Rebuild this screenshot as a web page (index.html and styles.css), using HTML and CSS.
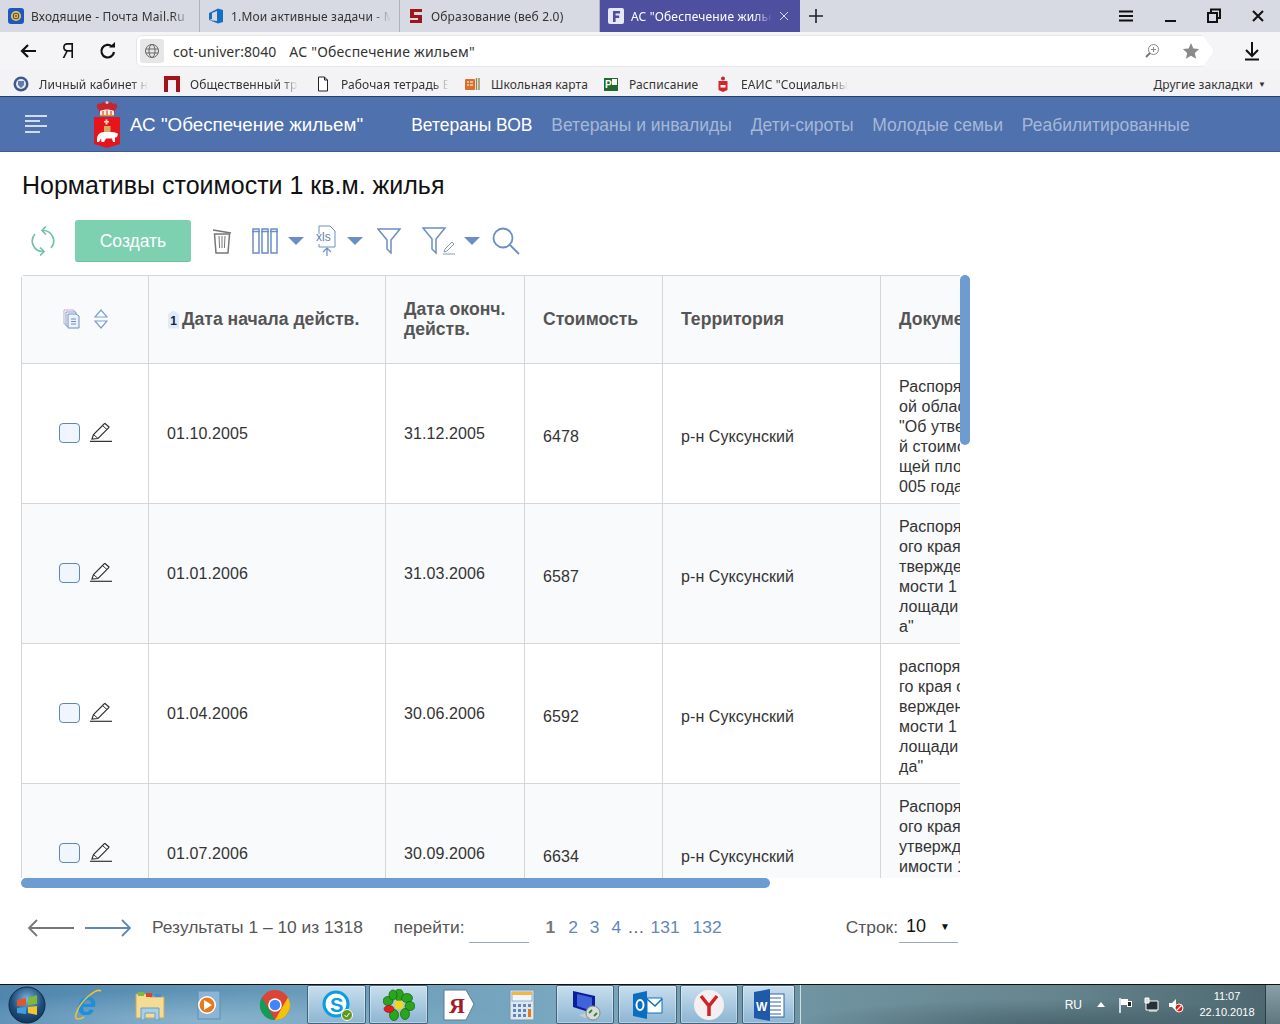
FILE: index.html
```html
<!DOCTYPE html>
<html lang="ru">
<head>
<meta charset="utf-8">
<title>АС "Обеспечение жильем"</title>
<link rel="stylesheet" href="styles.css">
</head>
<body>
<div class="tabs">
  <div class="tab">
    <svg class="fav" viewBox="0 0 16 16"><rect width="16" height="16" rx="3" fill="#1f55c4"/><circle cx="8" cy="8" r="4.200" fill="none" stroke="#ffc21a" stroke-width="1.800"/><circle cx="8" cy="8" r="1.600" fill="none" stroke="#ffc21a" stroke-width="1.200"/></svg>
    <span class="tab-text">Входящие - Почта Mail.Ru</span>
  </div>
  <div class="tab">
    <svg class="fav" viewBox="0 0 16 16"><path d="M1 5l9-4.500 5 1.500v12l-5 1.500-9-3.500 8 1V3L4 5v6l-3 1z" fill="#1570c4"/></svg>
    <span class="tab-text">1.Мои активные задачи - Microsoft</span>
  </div>
  <div class="tab">
    <svg class="fav" viewBox="0 0 16 16"><path d="M2 1h12v3H6v3h8v8H2v-3h8V10H2z" fill="#a0151c"/></svg>
    <span class="tab-text">Образование (веб 2.0)</span>
  </div>
  <div class="tab tab-active">
    <svg class="fav" viewBox="0 0 16 16"><rect width="16" height="16" rx="2" fill="#e8e8f4"/><path d="M5 3h7v2.400H7.600v2.200h3.600V10H7.600v4H5z" fill="#4f4fa0"/></svg>
    <span class="tab-text tab-text-light">АС "Обеспечение жильем"</span>
    <svg class="tab-close" viewBox="0 0 10 10"><path d="M1 1l8 8M9 1l-8 8" stroke="#d9d9ee" stroke-width="1"/></svg>
  </div>
  <svg class="newtab" viewBox="0 0 14 14"><path d="M7 0v14M0 7h14" stroke="#222" stroke-width="1.600"/></svg>
  <div class="win-controls">
    <svg class="win-ic" viewBox="0 0 16 16"><path d="M1 3.500h14M1 8h14M1 12.500h14" stroke="#111" stroke-width="1.800"/></svg>
    <svg class="win-ic" viewBox="0 0 16 16"><path d="M3 13h11" stroke="#111" stroke-width="2"/></svg>
    <svg class="win-ic" viewBox="0 0 16 16"><path d="M5 4V1.500h9V10h-3M2 5h9v9H2z" fill="none" stroke="#111" stroke-width="2"/></svg>
    <svg class="win-ic" viewBox="0 0 16 16"><path d="M3 3l10 10M13 3L3 13" stroke="#111" stroke-width="2"/></svg>
  </div>
</div>
<div class="toolbar">
  <svg class="tool-ic" viewBox="0 0 20 20"><path d="M18 10H4M10 4l-6 6 6 6" fill="none" stroke="#111" stroke-width="2.200"/></svg>
  <span class="ya">Я</span>
  <svg class="tool-ic" viewBox="0 0 20 20"><path d="M16 11a6.300 6.300 0 1 1-2-5.500" fill="none" stroke="#111" stroke-width="2.200"/><path d="M11 6.500h6V1z" fill="#111"/></svg>
  <div class="address">
    <span class="globe"><svg viewBox="0 0 16 16"><circle cx="8" cy="8" r="6.500" fill="none" stroke="#666"/><ellipse cx="8" cy="8" rx="3" ry="6.500" fill="none" stroke="#666"/><path d="M2 6h12M2 10h12" stroke="#666"/></svg></span>
    <span class="url">cot-univer:8040</span><span class="url-title">АС "Обеспечение жильем"</span>
    <svg class="zoom-ic" viewBox="0 0 16 16"><circle cx="9.500" cy="6.500" r="5" fill="none" stroke="#888"/><path d="M7 6.500h5M9.500 4v5" stroke="#888"/><path d="M6 10l-4 4" stroke="#777" stroke-width="2"/></svg>
    <svg class="star-ic" viewBox="0 0 18 18"><path d="M9 1l2.400 5.400 5.800.6-4.400 3.900 1.300 5.800L9 13.700l-5.100 3 1.300-5.800L.8 7l5.800-.6z" fill="#8a8a8a"/></svg>
  </div>
  <svg class="dl-ic" viewBox="0 0 18 20"><path d="M9 1v13M3 9l6 6 6-6" fill="none" stroke="#111" stroke-width="2"/><path d="M2 18.500h14" stroke="#111" stroke-width="2"/></svg>
</div>
<div class="bookmarks">
  <span class="bm bm1"><svg class="bm-ic" viewBox="0 0 16 16"><circle cx="8" cy="8" r="7.500" fill="#3f5a8a"/><circle cx="8" cy="8" r="5" fill="#e8e8ee"/><path d="M5 5h6v4l-3 3-3-3z" fill="#5f7bb0"/></svg><span class="bm-text bm-fade">Личный кабинет нал</span></span>
  <span class="bm bm2"><svg class="bm-ic" viewBox="0 0 16 16"><path d="M0 0h16v16h-4V4H4v12H0z" fill="#a2141a"/></svg><span class="bm-text bm-fade">Общественный транс</span></span>
  <span class="bm bm3"><svg class="bm-ic" viewBox="0 0 16 16"><path d="M3.500 1h6l3 3v11h-9zM9.500 1v3h3" fill="#fff" stroke="#222"/></svg><span class="bm-text bm-fade">Рабочая тетрадь Еди</span></span>
  <span class="bm bm4"><svg class="bm-ic" viewBox="0 0 16 16"><rect x="0" y="3" width="10" height="11" rx="1" fill="#d9702a"/><path d="M2 6h2M5 6h3M2 9h2M5 9h3" stroke="#fff"/><path d="M11.500 2v12M14 2v12" stroke="#8a8a5a" stroke-width="1.400"/></svg><span class="bm-text">Школьная карта</span></span>
  <span class="bm bm5"><svg class="bm-ic" viewBox="0 0 16 16"><rect x="1" y="2" width="14" height="13" fill="#1f6b2e"/><rect x="9" y="3" width="5" height="6" fill="#fff"/><text class="bm-p" x="2" y="12">P</text></svg><span class="bm-text">Расписание</span></span>
  <span class="bm bm6"><svg class="bm-ic" viewBox="0 0 16 16"><circle cx="8" cy="2.500" r="2" fill="#c8262c"/><path d="M3.500 5h9v9l-4.500 2-4.500-2z" fill="#d8232a"/><path d="M5.500 9h5v2.500h-5z" fill="#fff"/></svg><span class="bm-text bm-fade">ЕАИС "Социальные</span></span>
  <span class="bm-other">Другие закладки<span class="bm-caret">▼</span></span>
</div>
<header class="app-header">
  <svg class="burger" viewBox="0 0 22 18"><path d="M0 1h22M0 6h15M0 11h22M0 17h15" stroke="#fff" stroke-width="1.500"/></svg>
  <svg class="arms" viewBox="0 0 26 47">
    <path d="M5 9C1 6 3 1 7 3c1-2 3-2 4-1 1-2 3-2 4 0 1-1 3-1 4 1 4-2 6 3 2 6l-1 5H6z" fill="#c8242c"/>
    <path d="M6 10c4-2 10-2 14 0v4H6z" fill="#f6ecdc"/>
    <path d="M9 10v4M13 9.500V14M17 10v4" stroke="#c8242c"/>
    <circle cx="13" cy="1.500" r="1.500" fill="#d8c8c8"/>
    <path d="M6 14.500h14" stroke="#d0a020" stroke-width="1.200"/>
    <path d="M0 16h26v27l-13 4-13-4z" fill="#e8141c"/>
    <path d="M11.500 18.500h2v1.500h1.500v1.500h-1.500v2h-2v-2H10V20h1.500z" fill="#f6d8d0"/>
    <path d="M10 25h6.500v6H10z" fill="#d8a860"/>
    <path d="M3 38c0-4 3-7 7-7h8c3 0 5 1 6 2l-1 3-2 .5V41h-2l-1-3.500h-6L10 41H7.500L7 37.500 5 41H3z" fill="#fff"/>
  </svg>
  <span class="app-title">АС "Обеспечение жильем"</span>
  <nav class="nav">
    <a class="nav-item nav-active">Ветераны ВОВ</a>
    <a class="nav-item">Ветераны и инвалиды</a>
    <a class="nav-item">Дети-сироты</a>
    <a class="nav-item">Молодые семьи</a>
    <a class="nav-item">Реабилитированные</a>
  </nav>
</header>
<main class="page">
  <h1 class="page-title">Нормативы стоимости 1 кв.м. жилья</h1>
  <div class="actions">
    <svg class="ic-refresh" viewBox="0 0 24 30"><path d="M12 4.500A10.500 10.500 0 0 1 20 22" fill="none" stroke="#6fc4a8" stroke-width="1.700"/><path d="M15 .5l-4 4 4 4" fill="none" stroke="#6fc4a8" stroke-width="1.700"/><path d="M12 25.500A10.500 10.500 0 0 1 4 8" fill="none" stroke="#6fc4a8" stroke-width="1.700"/><path d="M9 21.500l4 4-4 4" fill="none" stroke="#6fc4a8" stroke-width="1.700"/></svg>
    <button class="btn-create">Создать</button>
    <svg class="ic-trash" viewBox="0 0 20 28"><path d="M1 3l18 3" stroke="#777" stroke-width="1.500"/><path d="M2.500 7h15l-1.500 19H4z" fill="none" stroke="#777" stroke-width="1.500"/><path d="M7 9l.6 12M10 9v12M13 9l-.6 12" stroke="#777"/></svg>
    <svg class="ic-cols" viewBox="0 0 26 26"><path d="M1 1h6v24H1zM10 1h6v24h-6zM19 1h6v24h-6zM0 3.500h8M9 3.500h8M18 3.500h8" fill="none" stroke="#6a8fc4" stroke-width="1.500"/></svg>
    <span class="caret caret-a"></span>
    <svg class="ic-xls" viewBox="0 0 22 32"><path d="M3 9V1h11l5 5v16H3v-3" fill="none" stroke="#6a8fc4"/><text class="xls-text" x="0" y="16">xls</text><path d="M11 31V23M7 27l4-4 4 4" fill="none" stroke="#6a8fc4" stroke-width="1.200"/></svg>
    <span class="caret caret-b"></span>
    <svg class="ic-filter" viewBox="0 0 24 26"><path d="M1 1h22l-9 11v13l-4-4v-9z" fill="none" stroke="#6a8fc4" stroke-width="1.500"/></svg>
    <svg class="ic-filter2" viewBox="0 0 34 28"><path d="M1 1h22l-9 11v14l-4-4V12z" fill="none" stroke="#6a8fc4" stroke-width="1.500"/><path d="M22 25l1-3 7-7 2 2-7 7zM21 27h12" fill="none" stroke="#8a9ab4"/></svg>
    <span class="caret caret-c"></span>
    <svg class="ic-search" viewBox="0 0 28 28"><circle cx="11" cy="11" r="9.500" fill="none" stroke="#6a8fc4" stroke-width="1.800"/><path d="M18 18l9 9" stroke="#6a8fc4" stroke-width="1.800"/></svg>
  </div>
  <div class="table-wrap">
    <div class="table-clip">
    <table class="grid">
      <colgroup><col class="c1"><col class="c2"><col class="c3"><col class="c4"><col class="c5"><col class="c6"></colgroup>
      <thead>
        <tr>
          <th class="cell-tools"><span class="tools tools-head">
            <svg class="ic-copy" viewBox="0 0 18 20"><path d="M1 1h10v14H1z" fill="#fff" stroke="#c9a8c9"/><path d="M3 3h10v14H3z" fill="#fff" stroke="#7b9fd0"/><path d="M5 5h8l3 2v12H5z" fill="#eef3fa" stroke="#6a8fc4"/><path d="M8 10h5M8 12.500h5M8 15h5" stroke="#6a8fc4"/></svg>
            <svg class="ic-sort" viewBox="0 0 14 22"><path d="M1 9l6-7 6 7zM1 13l6 7 6-7z" fill="#fff" stroke="#7b9fd0" stroke-width="1.200"/></svg>
          </span></th>
          <th><span class="sort-badge">1</span>Дата начала действ.</th>
          <th>Дата оконч. действ.</th>
          <th>Стоимость</th>
          <th>Территория</th>
          <th>Документ</th>
        </tr>
      </thead>
      <tbody>
        <tr>
          <td class="cell-tools"><span class="tools"><span class="check"></span><svg class="ic-edit" viewBox="0 0 22 20"><path d="M2 17l1.500-4.500L14 2l1-.5 4 3.500-.5 1L8 16.500z" fill="#fff" stroke="#333" stroke-width="1.200"/><path d="M12.500 3.500l4.500 4M3.500 12.500l4.500 4" stroke="#333"/><path d="M0 19.300h22" stroke="#333" stroke-width="1.200"/></svg></span></td>
          <td class="cell-date">01.10.2005</td><td class="cell-date">31.12.2005</td><td>6478</td><td>р-н Суксунский</td>
          <td class="doc">Распоряжение губернатора Перм<br>ой области от 2005 года № 12<br>"Об утверждении нормативно<br>й стоимости 1 квадратного мет<br>щей площади жилья на IV кв<br>005 года"</td>
        </tr>
        <tr>
          <td class="cell-tools"><span class="tools"><span class="check"></span><svg class="ic-edit" viewBox="0 0 22 20"><path d="M2 17l1.500-4.500L14 2l1-.5 4 3.500-.5 1L8 16.500z" fill="#fff" stroke="#333" stroke-width="1.200"/><path d="M12.500 3.500l4.500 4M3.500 12.500l4.500 4" stroke="#333"/><path d="M0 19.300h22" stroke="#333" stroke-width="1.200"/></svg></span></td>
          <td class="cell-date">01.01.2006</td><td class="cell-date">31.03.2006</td><td>6587</td><td>р-н Суксунский</td>
          <td class="doc">Распоряжение губернатора Перм<br>ого края от 2006 года № 15 "Об<br>тверждении нормативной стои<br>мости 1 квадратного метра об<br>лощади жилья на I квартал 200<br>а"</td>
        </tr>
        <tr>
          <td class="cell-tools"><span class="tools"><span class="check"></span><svg class="ic-edit" viewBox="0 0 22 20"><path d="M2 17l1.500-4.500L14 2l1-.5 4 3.500-.5 1L8 16.500z" fill="#fff" stroke="#333" stroke-width="1.200"/><path d="M12.500 3.500l4.500 4M3.500 12.500l4.500 4" stroke="#333"/><path d="M0 19.300h22" stroke="#333" stroke-width="1.200"/></svg></span></td>
          <td class="cell-date">01.04.2006</td><td class="cell-date">30.06.2006</td><td>6592</td><td>р-н Суксунский</td>
          <td class="doc">распоряжение губернатора Перм<br>го края от 2006 года "Об ут<br>верждении нормативной стои<br>мости 1 квадратного метра об<br>лощади жилья на II квартал го<br>да"</td>
        </tr>
        <tr>
          <td class="cell-tools"><span class="tools"><span class="check"></span><svg class="ic-edit" viewBox="0 0 22 20"><path d="M2 17l1.500-4.500L14 2l1-.5 4 3.500-.5 1L8 16.500z" fill="#fff" stroke="#333" stroke-width="1.200"/><path d="M12.500 3.500l4.500 4M3.500 12.500l4.500 4" stroke="#333"/><path d="M0 19.300h22" stroke="#333" stroke-width="1.200"/></svg></span></td>
          <td class="cell-date">01.07.2006</td><td class="cell-date">30.09.2006</td><td>6634</td><td>р-н Суксунский</td>
          <td class="doc">Распоряжение губернатора Перм<br>ого края от 2006 года "Об<br>утверждении нормативной сто<br>имости 1 квадратного метра об<br>щей площади жилья на III кварт<br>ал 2006 года"</td>
        </tr>
      </tbody>
    </table>
    </div>
    <div class="scroll-v"></div>
    <div class="scroll-h"></div>
  </div>
  <div class="pager">
    <svg class="arrow" viewBox="0 0 48 18"><path d="M47 9H2M10 1L2 9l8 8" fill="none" stroke="#777" stroke-width="1.800"/></svg>
    <svg class="arrow arrow-next" viewBox="0 0 48 18"><path d="M1 9h45M38 1l8 8-8 8" fill="none" stroke="#5f86bd" stroke-width="1.800"/></svg>
    <span class="results">Результаты 1 – 10 из 1318</span>
    <span class="goto">перейти:</span>
    <span class="goto-input"></span>
    <span class="pages"><b class="pg-cur">1</b><a class="pg">2</a><a class="pg">3</a><a class="pg">4</a><span class="pg-dots">…</span><a class="pg">131</a><a class="pg pg-last">132</a></span>
    <span class="rows-label">Строк:</span>
    <span class="rows-select"><span>10</span><span class="rows-caret">▼</span></span>
  </div>
</main>
<footer class="taskbar">
  <span class="tb-slot ts-orb"><svg class="tb-ic-orb" viewBox="0 0 38 38"><defs><radialGradient id="orb" cx="50%" cy="35%" r="70%"><stop offset="0" stop-color="#7fb7dc"/><stop offset=".6" stop-color="#1f4f7c"/><stop offset="1" stop-color="#0f2f52"/></radialGradient></defs><circle cx="19" cy="19" r="18" fill="url(#orb)" stroke="#0e2a44"/><path d="M9 14l9-2v7l-9 1z" fill="#e2562c"/><path d="M20 12l9-3v9l-9 1z" fill="#7fb93a"/><path d="M9 22l9-1v7l-9-1z" fill="#3f9fe0"/><path d="M20 21l9-1v9l-9-2z" fill="#f4c430"/></svg></span>
  <span class="tb-slot ts-ie"><svg class="tb-ic" viewBox="0 0 32 32"><text class="ie-e" x="4" y="26">e</text><path d="M28 2C24-1 8 10 3 25c-2 6 3 6 8 3" fill="none" stroke="#f0c030" stroke-width="1.600"/></svg></span>
  <span class="tb-slot ts-folder"><svg class="tb-ic" viewBox="0 0 32 32"><path d="M2 5h12l2 3h14v21H2z" fill="#f4dc94" stroke="#c8a860"/><rect x="4" y="3" width="6" height="4" fill="#7fb93a"/><rect x="12" y="4" width="6" height="4" fill="#d8452c"/><rect x="21" y="5" width="6" height="3" fill="#3f8fd0"/><path d="M7 31v-12h18v12h-4v-7h-10v7z" fill="#a8cfe8" stroke="#6a9ec4"/></svg></span>
  <span class="tb-slot ts-wmp"><svg class="tb-ic" viewBox="0 0 32 32"><rect x="5" y="2" width="22" height="28" fill="#8cb4d4" stroke="#5f8fb4"/><circle cx="14" cy="16" r="9" fill="#fff"/><circle cx="14" cy="16" r="7.500" fill="#e8781c"/><path d="M11 11l8 5-8 5z" fill="#fff"/></svg></span>
  <span class="tb-slot ts-chrome"><svg class="tb-ic" viewBox="0 0 32 32"><circle cx="16" cy="16" r="15" fill="#db4437"/><path d="M29 8.500A15 15 0 0 1 16 31l6.500-11.500z" fill="#f4c20d"/><path d="M16 31A15 15 0 0 1 3 8.500l7 12z" fill="#0f9d58"/><circle cx="16" cy="16" r="6.800" fill="#fff"/><circle cx="16" cy="16" r="5.300" fill="#4285f4"/></svg></span>
  <span class="tb-btn b-59 b-gap3"><svg class="tb-ic" viewBox="0 0 32 32"><circle cx="15" cy="15" r="12" fill="#fff" stroke="#0a9ee0" stroke-width="3"/><text class="skype-s" x="9" y="23">S</text><circle cx="26" cy="26" r="5.500" fill="#5f9a1c" stroke="#fff"/><path d="M23.500 26l2 2 3-4" stroke="#fff" fill="none"/></svg></span>
  <span class="tb-btn b-59 b-gap3"><svg class="tb-ic" viewBox="0 0 32 32"><g fill="#2aa61e" stroke="#145f10" stroke-width=".7"><ellipse cx="16" cy="6" rx="4.500" ry="6"/><ellipse cx="24" cy="9" rx="5.500" ry="4.500"/><ellipse cx="27" cy="17" rx="5" ry="4.500"/><ellipse cx="22" cy="25" rx="4.500" ry="5.500"/><ellipse cx="11" cy="26" rx="4.500" ry="5.500"/><ellipse cx="5" cy="12" rx="5" ry="4.500"/><ellipse cx="10" cy="6" rx="4" ry="5"/></g><ellipse cx="6" cy="20" rx="5" ry="3.500" fill="#e02020" stroke="#8a1010" stroke-width=".6"/><circle cx="16" cy="16" r="4.500" fill="#f4d41c"/></svg></span>
  <span class="tb-slot ts-ya"><svg class="tb-ic" viewBox="0 0 32 32"><path d="M1 1h22l8 14-8 16H1z" fill="#fff" stroke="#5f7b90"/><text class="ya-tb" x="6" y="24">Я</text></svg></span>
  <span class="tb-slot ts-calc"><svg class="tb-ic" viewBox="0 0 26 32"><rect x="1" y="1" width="24" height="30" rx="1" fill="#dfe7ee" stroke="#7f93a8"/><rect x="3" y="3" width="20" height="9" fill="#f2f6fa" stroke="#8cb0d0"/><rect x="3" y="3" width="20" height="3" fill="#f0b840"/><path d="M4 15h3v3H4zM9 15h3v3H9zM14 15h3v3h-3zM19 15h3v3h-3zM4 20h3v3H4zM9 20h3v3H9zM14 20h3v3h-3zM4 25h3v3H4zM9 25h3v3H9zM14 25h3v3h-3z" fill="#5f86bd"/><path d="M19 20h3v8h-3z" fill="#e8781c"/></svg></span>
  <span class="tb-btn b-58 b-gap4"><svg class="tb-ic" viewBox="0 0 32 32"><path d="M4 2l22 5v18L4 18z" fill="#0b1f9a"/><path d="M8 5l15 3.500V22L8 17z" fill="#3f63d8"/><path d="M10 26l10-3 6 2-10 4z" fill="#c8ccd0"/><circle cx="24" cy="24" r="7" fill="#d8dcdc" stroke="#888"/><path d="M20 24l3-3M28 24l-3 3" stroke="#2a8a2a" stroke-width="1.800"/></svg></span>
  <span class="tb-btn b-59 b-gap3"><svg class="tb-ic" viewBox="0 0 32 32"><path d="M15 2L1 5v22l14 3z" fill="#0a6fc4"/><ellipse cx="8" cy="16" rx="3.500" ry="5" fill="none" stroke="#fff" stroke-width="2"/><path d="M15 9h15v15H15z" fill="#fff" stroke="#0a6fc4"/><path d="M15 10l8 7 7-7" fill="none" stroke="#0a6fc4" stroke-width="1.500"/></svg></span>
  <span class="tb-btn b-58 b-gap4"><svg class="tb-ic" viewBox="0 0 32 32"><circle cx="16" cy="16" r="15" fill="#f4f0f0"/><path d="M8 7l8 10 8-10M16 17v10" fill="none" stroke="#d0202c" stroke-width="3.500"/></svg></span>
  <span class="tb-btn b-53 b-gap5"><svg class="tb-ic" viewBox="0 0 32 32"><rect x="14" y="5" width="17" height="23" fill="#fff" stroke="#3063b0"/><path d="M17 9h11M17 13h11M17 17h11M17 21h11M17 25h11" stroke="#3063b0"/><path d="M17 0L1 3v26l16 3z" fill="#1f5aa8"/><text class="word-w" x="3" y="22">W</text></svg></span>
  <span class="tb-spacer"></span>
  <span class="tray">
    <span class="tray-lang">RU</span>
    <span class="tray-up"></span>
    <svg class="tray-ic" viewBox="0 0 16 16"><path d="M2 1v15" stroke="#fff" stroke-width="1.500"/><path d="M3 2h7v2h4v6H9V8H3z" fill="#fff"/><path d="M10 5h3v4h-3z" fill="#222"/></svg>
    <svg class="tray-ic" viewBox="0 0 16 16"><path d="M3 4h12v9H3z" fill="#26323a" stroke="#fff"/><path d="M2 1h4v5H2zM6 14h8" stroke="#fff" fill="#ddd"/></svg>
    <svg class="tray-ic" viewBox="0 0 16 16"><path d="M1 6h3l4-4v12l-4-4H1z" fill="#fff"/><circle cx="11" cy="11" r="4" fill="#e01818" stroke="#fff"/><path d="M8.500 13.500l5-5" stroke="#fff" stroke-width="1.300"/></svg>
    <span class="clock"><span>11:07</span><span>22.10.2018</span></span>
    <span class="show-desktop"></span>
  </span>
</footer>
</body>
</html>
```
FILE: styles.css
```css
* { box-sizing: border-box; }
html, body { margin: 0; padding: 0; }
body { width: 1280px; height: 1024px; overflow: hidden; display: flex; flex-direction: column; background: #fff; font-family: "Liberation Sans", Arial, sans-serif; color: #333; }
svg { display: block; flex: none; }

/* tab strip */
.tabs { height: 32px; flex: none; display: flex; align-items: stretch; background: #d7d9e3; }
.tab { width: 200px; display: flex; align-items: center; padding: 0 8px; gap: 7px; border-right: 1px solid #aeb0ba; overflow: hidden; }
.tab-active { background: #4f4fa0; border-right: 0; padding-right: 0; }
.fav { width: 16px; height: 16px; }
.tab-text { font: 12px "Noto Sans", sans-serif; letter-spacing: .16px; color: #333; white-space: nowrap; flex: 1; overflow: hidden; min-width: 0; -webkit-mask-image: linear-gradient(to right, #000 88%, transparent); mask-image: linear-gradient(to right, #000 88%, transparent); }
.tab-text-light { color: #fff; }
.tab-close { width: 10px; height: 10px; margin-right: 11px; }
.newtab { width: 14px; height: 14px; margin: 9px 0 0 9px; }
.win-controls { margin-left: auto; display: flex; gap: 28px; padding: 8px 14px 0 0; }
.win-ic { width: 16px; height: 16px; }

/* address bar */
.toolbar { height: 38px; flex: none; display: flex; align-items: center; background: #f5f5f7; padding-left: 18px; position: relative; }
.tool-ic { width: 20px; height: 20px; }
.ya { width: 20px; margin: 0 20px; text-align: center; font: 22px "Liberation Sans", sans-serif; color: #111; transform: scaleX(.8); }
.address { width: 1078px; height: 32px; margin-left: 18px; background: #fff; border: 1px solid #e6e6ea; border-radius: 6px 0 0 6px; display: flex; align-items: center; clip-path: polygon(0 0, 98.900% 0, 100% 50%, 98.900% 100%, 0 100%); }
.globe { width: 24px; height: 24px; margin-left: 3px; background: #e6e6e6; border-radius: 3px; display: flex; align-items: center; justify-content: center; }
.globe svg { width: 16px; height: 16px; }
.url { font: 14px "Noto Sans", sans-serif; letter-spacing: .07px; color: #333; margin-left: 9px; }
.url-title { font: 14px "Noto Sans", sans-serif; letter-spacing: .22px; color: #333; margin-left: 13px; }
.zoom-ic { width: 16px; height: 16px; margin-left: auto; }
.star-ic { width: 18px; height: 18px; margin: 0 13px 0 22px; }
.dl-ic { width: 18px; height: 20px; margin-left: 29px; }

/* bookmarks */
.bookmarks { height: 26px; flex: none; display: flex; align-items: center; background: #f3f3f5; padding-top: 2px; font: 12px "Noto Sans", sans-serif; letter-spacing: .1px; }
.bm { display: flex; align-items: center; gap: 10px; overflow: hidden; flex: none; }
.bm-ic { width: 16px; height: 16px; }
.bm-text { white-space: nowrap; color: #333; }
.bm-fade { -webkit-mask-image: linear-gradient(to right, #000 85%, transparent); mask-image: linear-gradient(to right, #000 85%, transparent); overflow: hidden; }
.bm1 { width: 135px; margin-left: 13px; }
.bm2 { width: 134px; margin-left: 16px; }
.bm3 { width: 134px; margin-left: 17px; }
.bm4 { width: 125px; margin-left: 16px; }
.bm5 { width: 97px; margin-left: 13px; }
.bm6 { width: 133px; margin-left: 15px; }
.bm-p { font: bold 10px "Liberation Sans", sans-serif; fill: #fff; }
.bm-other { margin-left: auto; padding-right: 14px; color: #333; }
.bm-caret { font-size: 8px; margin-left: 5px; vertical-align: 2px; }

/* app header */
.app-header { height: 56px; flex: none; background: #4f71ae; border-top: 1px solid #24406f; border-bottom: 1px solid #3c5a90; display: flex; align-items: center; padding-left: 25px; }
.burger { width: 22px; height: 18px; }
.arms { width: 26px; height: 47px; margin: 1px 0 0 47px; }
.app-title { font-size: 18.800px; color: #fff; margin: 2px 0 0 10px; white-space: nowrap; }
.nav { display: flex; gap: 18.800px; margin: 2px 0 0 48px; }
.nav-item { font-size: 17.500px; color: #a6b8d6; white-space: nowrap; }
.nav-active { color: #fff; }

/* page */
.page { flex: 1; min-height: 0; padding-left: 21px; display: flex; flex-direction: column; align-items: flex-start; }
.page-title { font-size: 25px; font-weight: 400; color: #111; margin: 0; padding: 19px 0 0 1px; height: 50px; line-height: 28px; }
.actions { height: 73px; display: flex; align-items: center; padding-top: 5px; }
.ic-refresh { width: 24px; height: 30px; margin-left: 10px; }
.btn-create { width: 116px; height: 42px; margin-left: 20px; padding-top: 2px; background: #7dd0b0; color: #fff; border: 0; border-bottom: 1px solid #6fbfa0; border-radius: 3px; font: 17.500px "Liberation Sans", sans-serif; }
.ic-trash { width: 20px; height: 28px; margin-left: 21px; }
.ic-cols { width: 26px; height: 26px; margin-left: 20px; }
.caret { width: 0; height: 0; border-left: 8px solid transparent; border-right: 8px solid transparent; border-top: 8px solid #6a8fc4; flex: none; }
.caret-a { margin-left: 10px; }
.ic-xls { width: 22px; height: 32px; margin-left: 12px; }
.xls-text { font: 12px "Liberation Sans", sans-serif; fill: #5f7fb4; }
.caret-b { margin-left: 9px; }
.ic-filter { width: 24px; height: 26px; margin-left: 14px; }
.ic-filter2 { width: 34px; height: 28px; margin-left: 21px; }
.caret-c { margin-left: 8px; }
.ic-search { width: 28px; height: 28px; margin-left: 12px; }

/* table */
.table-wrap { width: 939px; height: 603px; flex: none; position: relative; }
.table-clip { width: 939px; height: 603px; overflow: hidden; border-radius: 4px 0 0 0; }
.grid { width: 1100px; table-layout: fixed; border-collapse: collapse; font-size: 16px; letter-spacing: .08px; }
.c1 { width: 127px; } .c2 { width: 237px; } .c3 { width: 139px; } .c4 { width: 138px; } .c5 { width: 218px; } .c6 { width: 241px; }
.grid th { height: 88px; background: #f9fafc; border: 1px solid #d6d6d8; font-size: 17.600px; line-height: 20px; font-weight: 700; letter-spacing: 0; color: #555; text-align: left; padding: 0 8px 2px 18px; vertical-align: middle; }
.grid td { height: 140px; border: 1px solid #d6d6d8; padding: 6px 18px 0; vertical-align: middle; color: #333; line-height: 20px; white-space: nowrap; }
.grid tbody tr:nth-child(even) td { background: #f9fafc; }
.grid td.cell-date { padding-top: 0; }
.grid td.cell-tools { padding: 0 0 1px 1px; }
.grid th.cell-tools { padding: 0 0 1px; }
.tools { display: flex; align-items: center; justify-content: center; gap: 10px; }
.tools-head { gap: 13px; padding-left: 1px; }
.ic-copy { width: 18px; height: 20px; }
.ic-sort { width: 14px; height: 22px; }
.sort-badge { display: inline-block; width: 11px; height: 18px; background: #deebfa; margin: 0 3px 0 1px; font-size: 12px; line-height: 21px; text-align: center; color: #223; clip-path: polygon(50% 0, 100% 20%, 100% 100%, 0 100%, 0 20%); }
.check { width: 21px; height: 20px; background: #f0f6fe; border: 1px solid #5f86b4; border-radius: 4px; }
.ic-edit { width: 22px; height: 20px; margin-bottom: 2px; }
.scroll-v { position: absolute; left: 939px; top: 0; width: 10px; height: 170px; background: #6e9bd0; border-radius: 5px; }
.scroll-h { position: absolute; left: 0; top: 603px; width: 749px; height: 10px; background: #6e9bd0; border-radius: 5px; }

/* pager */
.pager { width: 939px; height: 101px; flex: none; display: flex; align-items: center; font-size: 17.400px; padding-bottom: 2px; color: #555; }
.arrow { width: 48px; height: 18px; margin-left: 6px; }
.arrow-next { margin-left: 9px; }
.results { margin-left: 20px; white-space: nowrap; }
.goto { margin-left: 31px; }
.goto-input { width: 60px; height: 34px; margin: 31px 0 0 5px; border-bottom: 1px solid #9aa9c0; align-self: flex-start; }
.pages { margin-left: 16px; display: flex; white-space: nowrap; }
.pg-cur { font-weight: 700; color: #777; margin-right: 13px; }
.pg { color: #5f86bd; margin-right: 12px; }
.pg-dots { margin: 0 6px 0 -6px; color: #555; }
.pg-last { margin: 0 0 0 1px; }
.rows-label { margin-left: auto; }
.rows-select { width: 59px; height: 34px; margin: 31px 2px 0 1px; align-self: flex-start; border-bottom: 1px solid #9aa9c0; display: flex; justify-content: space-between; align-items: center; color: #111; padding: 2px 8px 0 7px; white-space: nowrap; font-size: 18px; }
.rows-caret { font-size: 10px; }

/* taskbar */
.taskbar { height: 40px; flex: none; display: flex; align-items: center; border-top: 1px solid #111; background: radial-gradient(ellipse 300px 30px at 200px 36px, rgba(170,205,225,.55), transparent), radial-gradient(ellipse 260px 26px at 1050px 40px, rgba(40,60,70,.45), transparent), linear-gradient(to right, #4f86ae 0%, #6a9cba 25%, #7aa8c0 45%, #6f929f 65%, #66868f 82%, #4c666f 100%); }
.tb-slot { display: flex; align-items: center; justify-content: center; height: 39px; flex: none; }
.ts-orb { width: 54px; } .ts-ie { width: 70px; } .ts-folder { width: 52px; } .ts-wmp { width: 66px; } .ts-chrome { width: 65px; } .ts-ya { width: 56px; } .ts-calc { width: 69px; }
.tb-ic-orb { width: 38px; height: 38px; }
.tb-ic { width: 32px; height: 32px; }
.tb-btn { height: 39px; display: flex; align-items: center; justify-content: center; flex: none; border: 1px solid #44627a; border-radius: 2px; background: linear-gradient(to bottom, #c8dfee, #8db5d2); box-shadow: inset 0 0 0 1px rgba(255,255,255,.35); }
.b-59 { width: 59px; } .b-58 { width: 58px; } .b-53 { width: 53px; }
.b-gap3 { margin-right: 3px; } .b-gap4 { margin-right: 4px; } .b-gap5 { margin-right: 5px; }
.ie-e { font: italic 700 34px "Liberation Sans", sans-serif; fill: #1e8fdc; }
.skype-s { font: 700 20px "Liberation Sans", sans-serif; fill: #0a9ee0; }
.ya-tb { font: 700 22px "Liberation Serif", serif; fill: #a01c28; }
.word-w { font: 700 12px "Liberation Sans", sans-serif; fill: #fff; }
.tb-spacer { flex: 1; border-left: 1px solid #cfdfe6; height: 39px; }
.tray { display: flex; align-items: center; height: 39px; color: #fff; font-size: 12px; }
.tray-lang { margin-right: 15px; }
.tray-up { width: 0; height: 0; border-left: 4px solid transparent; border-right: 4px solid transparent; border-bottom: 5px solid #fff; margin-right: 13px; }
.tray-ic { width: 16px; height: 16px; margin-right: 9px; }
.clock { display: flex; flex-direction: column; align-items: center; gap: 3px; width: 54px; margin: 0 11px 0 7px; line-height: 13px; font-size: 11px; }
.show-desktop { width: 15px; height: 39px; background: linear-gradient(to bottom, #8aa0a8, #5f7680); border-left: 1px solid #2c3c44; }
```
